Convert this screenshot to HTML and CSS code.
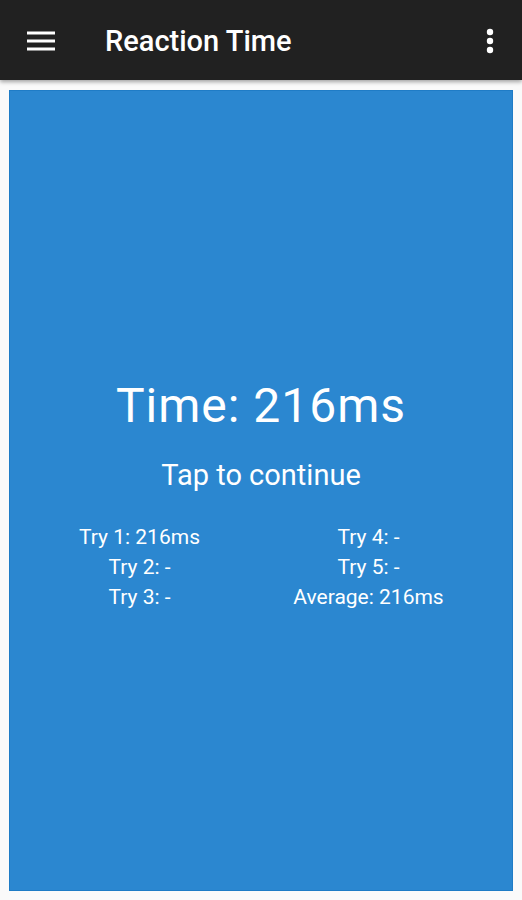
FILE: index.html
```html
<!DOCTYPE html>
<html lang="en">
<head>
    <meta charset="UTF-8">
    <meta name="viewport" content="width=device-width, initial-scale=1.0">
    <title>Reaction Time</title>
    <link rel="stylesheet" href="styles.css">
</head>
<body>
    <div class="toolbar">
        <span class="menu-btn">
            <svg width="28" height="22" viewBox="0 0 28 22">
                <rect x="0" y="1.5" width="28" height="3" fill="#fff"/>
                <rect x="0" y="9.5" width="28" height="3" fill="#fff"/>
                <rect x="0" y="17.5" width="28" height="3" fill="#fff"/>
            </svg>
        </span>
        <h1 class="title">Reaction Time</h1>
        <span class="more-btn">
            <svg width="8" height="26" viewBox="0 0 8 26">
                <circle cx="4" cy="4" r="3.2" fill="#fff"/>
                <circle cx="4" cy="13" r="3.2" fill="#fff"/>
                <circle cx="4" cy="22" r="3.2" fill="#fff"/>
            </svg>
        </span>
    </div>
    <div class="panel">
        <div class="time">Time: 216ms</div>
        <div class="hint">Tap to continue</div>
        <div class="tries">
            <div class="col">
                <div>Try 1: 216ms</div>
                <div>Try 2: -</div>
                <div>Try 3: -</div>
            </div>
            <div class="col">
                <div>Try 4: -</div>
                <div>Try 5: -</div>
                <div>Average: 216ms</div>
            </div>
        </div>
    </div>
</body>
</html>
```
FILE: styles.css
```css
*{
    margin: 0;
    padding: 0;
    box-sizing: border-box;
}
body{
    width: 522px;
    height: 900px;
    background: #fafafa;
    font-family: Roboto, "Liberation Sans", sans-serif;
    overflow: hidden;
}
.toolbar{
    position: relative;
    z-index: 1;
    display: flex;
    align-items: center;
    height: 80px;
    padding: 0 0 0 27px;
    background: #212121;
    color: #fff;
    box-shadow: 0 2px 4px rgba(0, 0, 0, 0.35);
}
.menu-btn{
    display: flex;
    margin-top: 1px;
}
.title{
    flex: 1;
    margin-left: 50px;
    font-size: 29px;
    font-weight: 500;
    line-height: 34px;
    margin-top: 2px;
}
.more-btn{
    display: flex;
    width: 8px;
    margin-right: 28px;
    margin-top: 1px;
}
.panel{
    height: 801px;
    margin: 10px 9px 0 9px;
    padding-top: 288px;
    background: #2b87d0;
    border: 1px solid #1f7cc6;
    color: #fff;
    text-align: center;
}
.time{
    font-size: 48px;
    line-height: 54px;
    letter-spacing: 1px;
}
.hint{
    margin-top: 25px;
    font-size: 29px;
    line-height: 34px;
}
.tries{
    display: grid;
    grid-template-columns: 229px 229px;
    margin: 30px 0 0 15px;
    font-size: 21px;
    line-height: 30px;
}
```
